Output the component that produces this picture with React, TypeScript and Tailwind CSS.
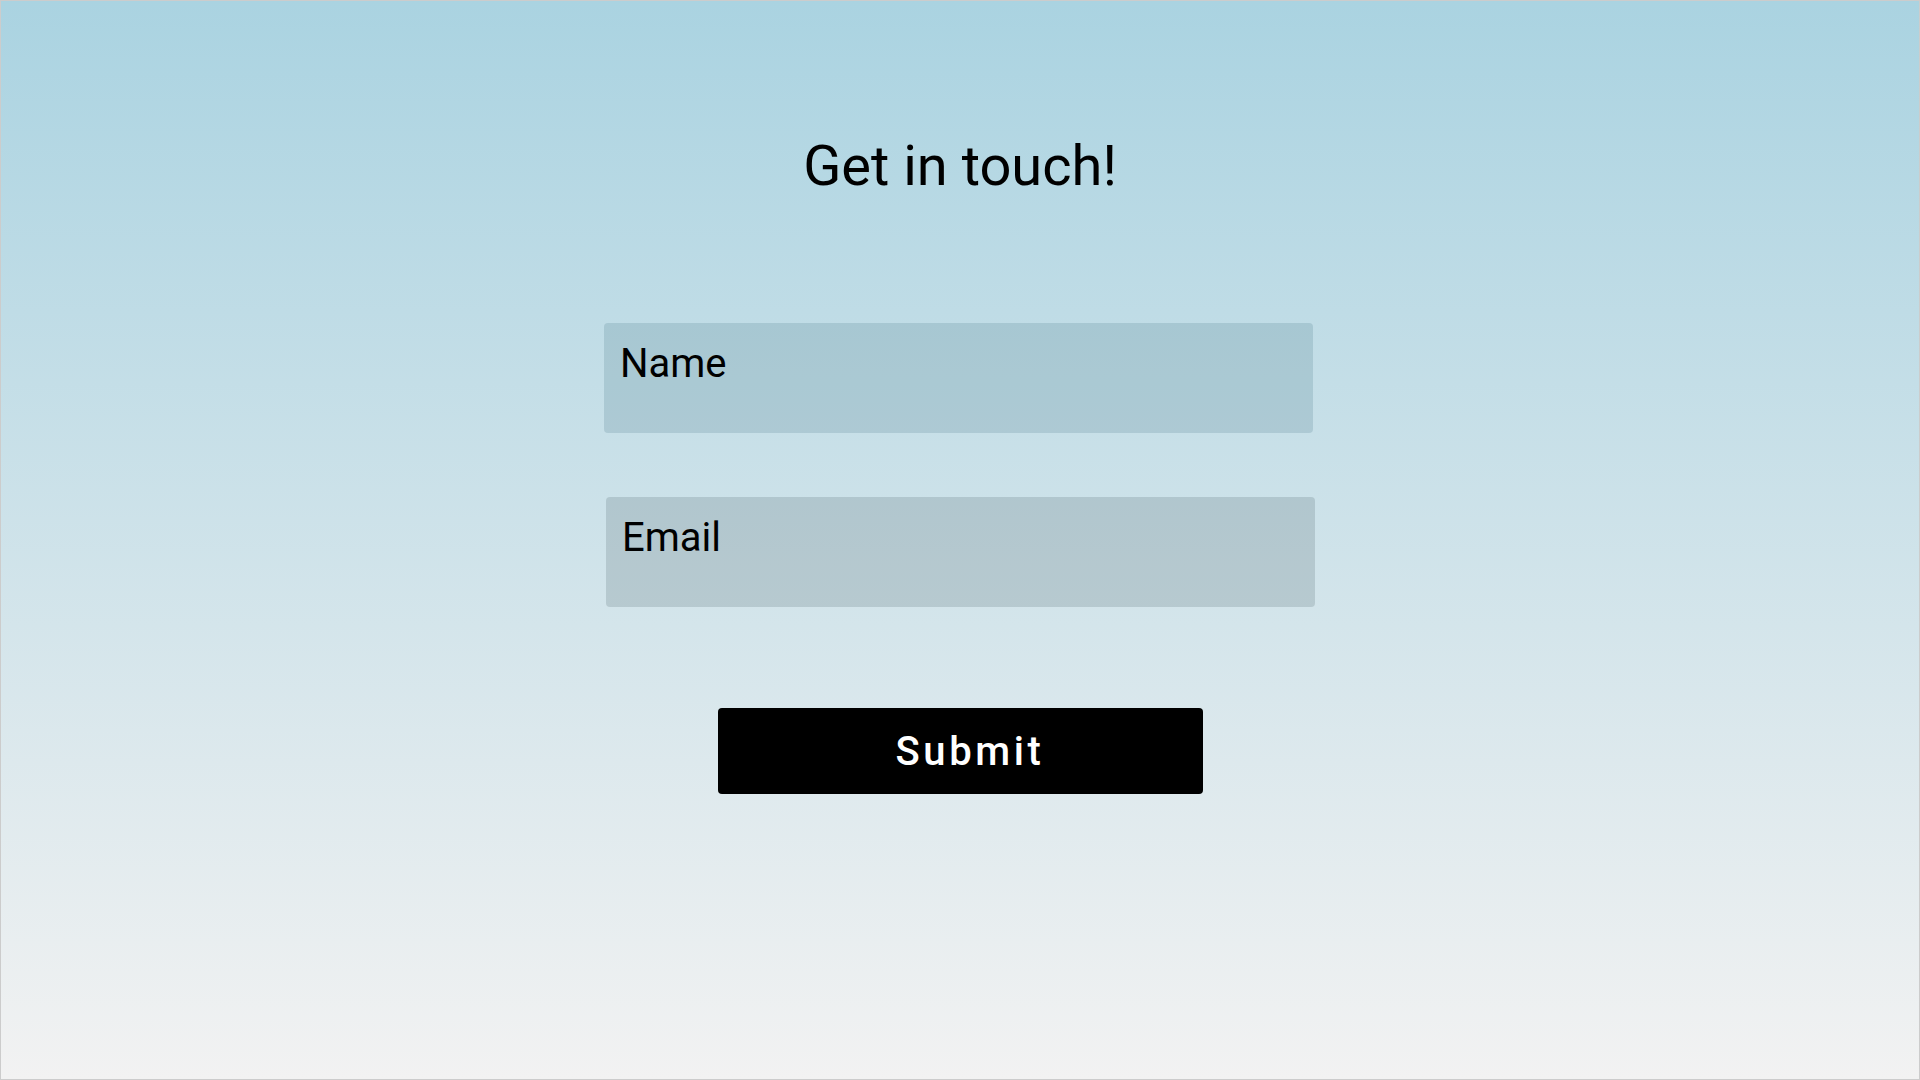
export default function App() {
    return (
        <div
            className="h-screen w-full box-border border border-[#cccccc] bg-gradient-to-b from-[#aad3e1] to-[#f2f2f2] flex flex-col items-center pt-[132px]"
            style={{ fontFamily: "Roboto, 'Liberation Sans', sans-serif" }}
        >
            <h1 className="text-[56px] leading-[normal] font-normal text-black">
                Get in touch!
            </h1>
            <form
                className="flex flex-col items-center mt-[124px]"
                onSubmit={(e) => e.preventDefault()}
            >
                <textarea
                    placeholder="Name"
                    className="mr-[3px] w-[709px] h-[110px] resize-none rounded-[4px] bg-[rgba(28,81,98,0.15)] px-[16px] pt-[17px] text-[40px] leading-[normal] text-black placeholder:text-black outline-none"
                />
                <textarea
                    placeholder="Email"
                    className="ml-[1px] mt-[64px] w-[709px] h-[110px] resize-none rounded-[4px] bg-[rgba(27,45,52,0.15)] px-[16px] pt-[17px] text-[40px] leading-[normal] text-black placeholder:text-black outline-none"
                />
                <button
                    type="submit"
                    className="mt-[101px] w-[485px] h-[86px] rounded-[4px] bg-black text-white text-[40px] leading-[normal] font-medium tracking-[0.09em] pl-[20px]"
                >
                    Submit
                </button>
            </form>
        </div>
    );
}
